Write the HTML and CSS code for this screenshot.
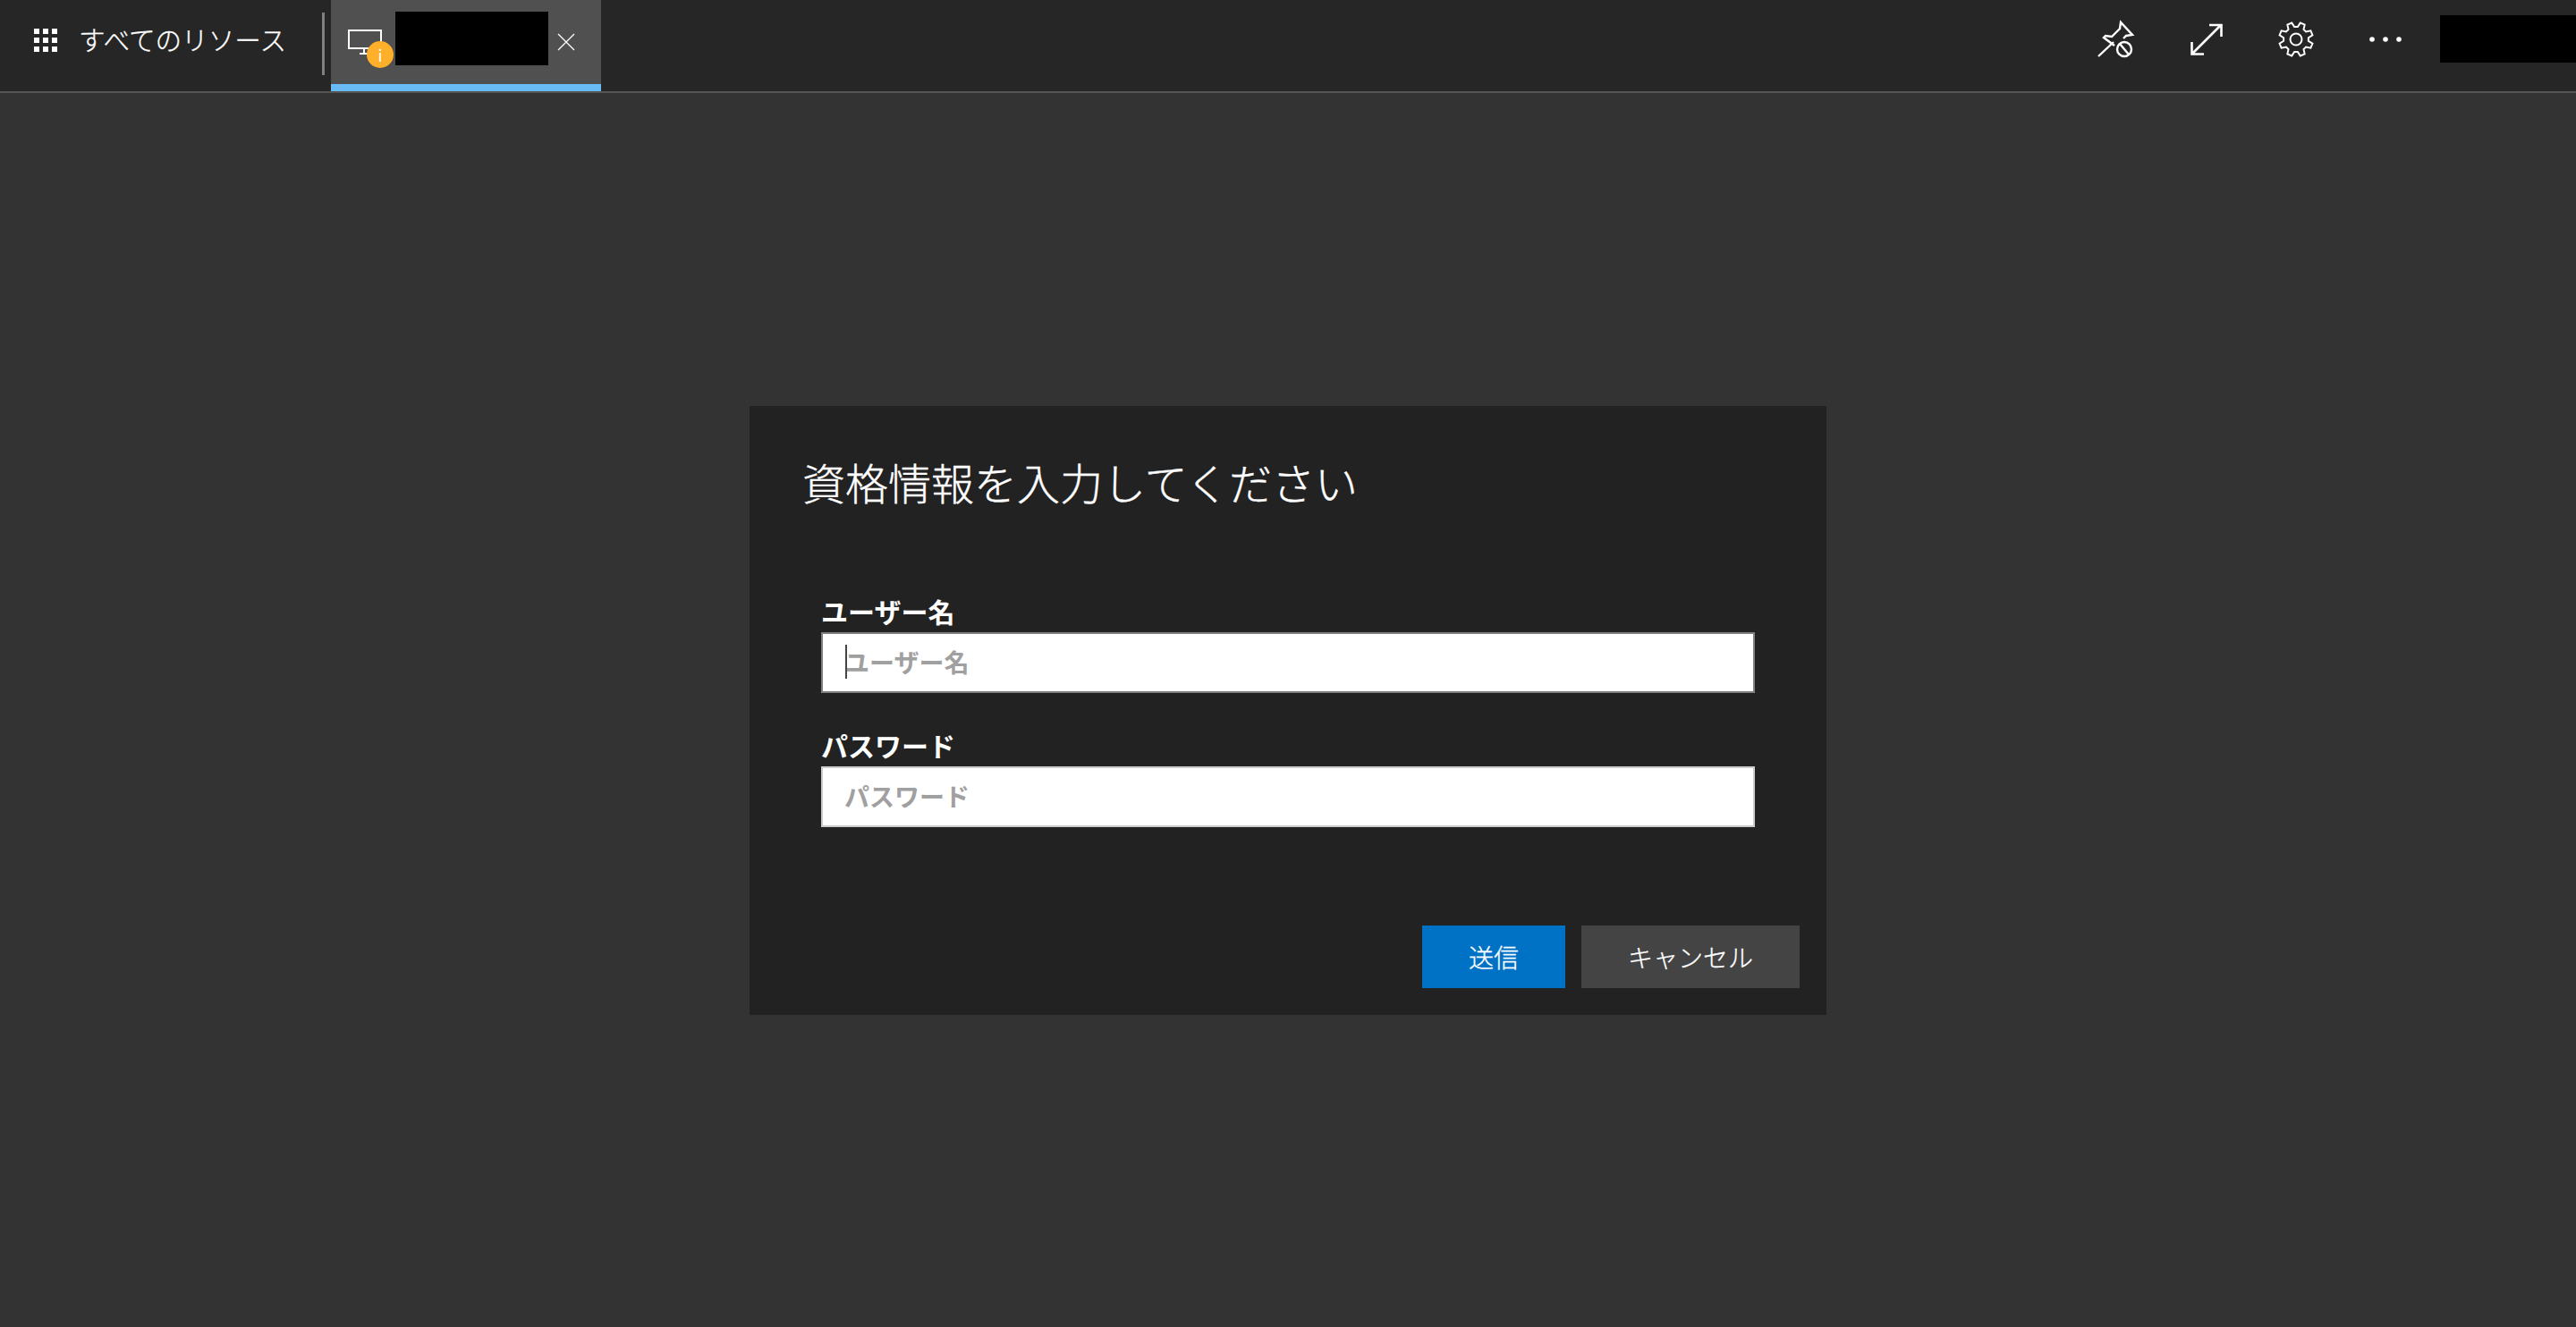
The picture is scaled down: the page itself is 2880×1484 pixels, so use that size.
FILE: index.html
```html
<!DOCTYPE html>
<html lang="ja">
<head>
<meta charset="utf-8">
<title>資格情報を入力してください</title>
<link rel="stylesheet" href="styles.css">
</head>
<body>
<header class="topbar">
  <svg class="grid-icon" width="26" height="26" viewBox="0 0 26 26" fill="#fff"><rect x="0" y="0" width="6" height="6"/><rect x="10" y="0" width="6" height="6"/><rect x="20" y="0" width="6" height="6"/><rect x="0" y="10" width="6" height="6"/><rect x="10" y="10" width="6" height="6"/><rect x="20" y="10" width="6" height="6"/><rect x="0" y="20" width="6" height="6"/><rect x="10" y="20" width="6" height="6"/><rect x="20" y="20" width="6" height="6"/></svg>
  <span class="all-resources">すべてのリソース</span>
  <span class="separator"></span>
  <div class="tab">
    <span class="tab-icon">
      <svg width="38" height="30" viewBox="0 0 38 30" fill="none" stroke="#fff" stroke-width="2"><path d="M1 1H37V21H1Z"/><path d="M18 22V26M13 27H24"/></svg>
      <span class="badge">i</span>
    </span>
    <span class="redact tab-redact"></span>
    <svg class="tab-close" width="20" height="20" viewBox="0 0 20 20" fill="none" stroke="#fff" stroke-width="1.3"><path d="M1 1L19 19M19 1L1 19"/></svg>
  </div>
  <div class="actions">
    <svg class="pin" width="54" height="50" viewBox="0 0 54 50" fill="none" stroke="#fff" stroke-width="2.4"><path d="M7 45L24 29"/><path d="M25 33L13 24L15 22L22 23L31 14L32 7L45 21L38 22L35 25"/><circle cx="36" cy="37" r="8"/><path d="M31 31L41 43"/></svg>
    <svg class="expand" width="36" height="36" viewBox="0 0 36 36" fill="none" stroke="#fff" stroke-width="2.6"><path d="M2 34L34 2M21 2H34.5V15M1.5 21V34.5H15"/></svg>
    <svg class="gear" width="40" height="40" viewBox="-20 -20 40 40" fill="none" stroke="#fff" stroke-width="2"><path d="M13.88 1.83L18.4 4.76L16.37 9.64L11.11 8.52L8.52 11.11L9.64 16.37L4.76 18.4L1.83 13.88L-1.83 13.88L-4.76 18.4L-9.64 16.37L-8.52 11.11L-11.11 8.52L-16.37 9.64L-18.4 4.76L-13.88 1.83L-13.88 -1.83L-18.4 -4.76L-16.37 -9.64L-11.11 -8.52L-8.52 -11.11L-9.64 -16.37L-4.76 -18.4L-1.83 -13.88L1.83 -13.88L4.76 -18.4L9.64 -16.37L8.52 -11.11L11.11 -8.52L16.37 -9.64L18.4 -4.76L13.88 -1.83Z"/><circle r="6.5"/></svg>
    <svg class="dots" width="36" height="6" viewBox="0 0 36 6" fill="#fff"><circle cx="3" cy="3" r="2.8"/><circle cx="18" cy="3" r="2.8"/><circle cx="33" cy="3" r="2.8"/></svg>
    <span class="redact user-redact"></span>
  </div>
</header>
<main class="stage">
  <section class="dialog">
    <h1 class="dialog-title">資格情報を入力してください</h1>
    <form class="fields">
      <label class="field">
        <span class="field-label">ユーザー名</span>
        <span class="input-wrap">
          <input class="text-input is-focused" type="text" placeholder="ユーザー名">
          <span class="caret"></span>
        </span>
      </label>
      <label class="field">
        <span class="field-label">パスワード</span>
        <span class="input-wrap">
          <input class="text-input" type="password" placeholder="パスワード">
        </span>
      </label>
    </form>
    <div class="buttons">
      <button class="btn btn-primary" type="button">送信</button>
      <button class="btn btn-secondary" type="button">キャンセル</button>
    </div>
  </section>
</main>
</body>
</html>
```
FILE: styles.css
```css
* { box-sizing: border-box; }
html, body { margin: 0; height: 100%; }
body {
  width: 2880px;
  height: 1484px;
  overflow: hidden;
  display: flex;
  flex-direction: column;
  background: #333333;
  color: #fff;
  font-family: "Noto Sans CJK JP", "Noto Sans", sans-serif;
}
.topbar {
  flex: none;
  height: 104px;
  display: flex;
  align-items: flex-start;
  background: #262626;
  border-bottom: 2px solid #555555;
}
.grid-icon { flex: none; margin: 32px 0 0 38px; }
.all-resources {
  width: 240px;
  margin: 22px 0 0 24px;
  font-size: 29.6px;
  font-weight: 300;
  line-height: 44px;
  white-space: nowrap;
  -webkit-text-stroke: 0.3px #fff;
}
.separator {
  flex: none;
  width: 3px;
  height: 70px;
  margin: 14px 0 0 32px;
  background: #808080;
}
.tab {
  flex: none;
  display: flex;
  align-items: flex-start;
  width: 302px;
  height: 102px;
  margin-left: 7px;
  background: #505050;
  border-bottom: 8px solid #69bbf5;
}
.tab-icon {
  position: relative;
  flex: none;
  width: 38px;
  height: 30px;
  margin: 33px 0 0 19px;
}
.tab-icon svg { display: block; }
.badge {
  position: absolute;
  left: 21px;
  top: 13px;
  width: 30px;
  height: 30px;
  border-radius: 50%;
  background: #ffb02a;
  color: #fff;
  font-size: 18px;
  line-height: 30px;
  text-align: center;
}
.redact { flex: none; background: #000; }
.tab-redact { width: 171px; height: 60px; margin: 13px 0 0 14.5px; }
.tab-close { flex: none; margin: 37px 0 0 10px; }
.actions {
  flex: none;
  margin-left: auto;
  display: flex;
  align-items: flex-start;
}
.pin { flex: none; margin: 18px 0 0 0; }
.expand { flex: none; margin: 26px 0 0 56px; }
.gear { flex: none; margin: 24px 0 0 62px; }
.dots { flex: none; margin: 41px 0 0 62px; }
.user-redact { width: 152px; height: 53px; margin: 17px 0 0 43px; }
.stage {
  flex: 1;
  display: flex;
  align-items: center;
  justify-content: center;
}
.dialog {
  width: 1204px;
  height: 681px;
  display: flex;
  flex-direction: column;
  padding: 48px 30px 30px 59px;
  background: #222222;
}
.dialog-title {
  margin: 0;
  font-size: 48px;
  font-weight: 300;
  line-height: 72px;
  white-space: nowrap;
  -webkit-text-stroke: 0.4px #fff;
}
.fields {
  display: flex;
  flex-direction: column;
  gap: 36px;
  margin: 87px 50px 0 21px;
}
.field { display: block; }
.field-label {
  display: block;
  font-size: 30px;
  font-weight: 700;
  line-height: 45px;
  margin-bottom: 1px;
}
.input-wrap { position: relative; display: block; }
.text-input {
  display: block;
  width: 100%;
  height: 68px;
  padding: 0 24px 2px;
  border: 2px solid #cccccc;
  border-radius: 0;
  outline: none;
  background: #fff;
  color: #222;
  font: 700 28px "Noto Sans CJK JP", "Noto Sans", sans-serif;
}
.text-input::placeholder { color: #a0a0a0; opacity: 1; }
.is-focused { border-color: #808080; }
.caret {
  position: absolute;
  left: 27px;
  top: 14px;
  width: 2px;
  height: 38px;
  background: #444;
}
.buttons {
  display: flex;
  justify-content: flex-end;
  gap: 18px;
  margin-top: auto;
}
.btn {
  height: 70px;
  border: none;
  border-radius: 0;
  color: #fff;
  font: 300 28px "Noto Sans CJK JP", "Noto Sans", sans-serif;
  -webkit-text-stroke: 0.3px #fff;
}
.btn-primary { width: 160px; background: #0072c6; }
.btn-secondary { width: 244px; background: #444444; }
```
